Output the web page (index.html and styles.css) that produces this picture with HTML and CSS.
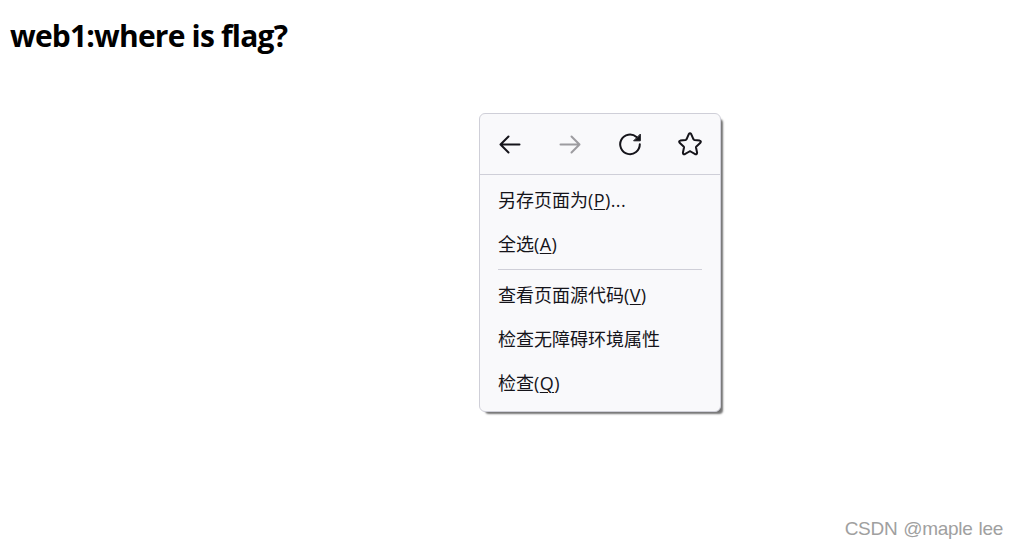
FILE: index.html
```
<!DOCTYPE html>
<html lang="zh-CN">
<head>
<meta charset="UTF-8">
<meta name="viewport" content="width=device-width, initial-scale=1.0">
<title>web1</title>
<link rel="stylesheet" href="styles.css">
</head>
<body>
<h1 class="title">web1:where is flag?</h1>

<!-- 右键菜单 -->
<div class="menu">
<div class="nav">
<button class="nav-btn" aria-label="后退">
<svg class="icon" viewBox="0 0 24 24">
<path d="M21.500 12.500H2.500M10.500 4.500l-8 8 8 8"/>
</svg>
</button>
<button class="nav-btn" aria-label="前进" disabled>
<svg class="icon" viewBox="0 0 24 24">
<path d="M2.500 12.500h19M13.500 4.500l8 8-8 8"/>
</svg>
</button>
<button class="nav-btn" aria-label="刷新">
<svg class="icon" viewBox="0 0 24 24">
<path d="M21.800 12.300A9.800 9.800 0 1 1 18.500 5"/>
<path class="solid" d="M22.300 2.500v6.300H16z"/>
</svg>
</button>
<button class="nav-btn" aria-label="收藏">
<svg class="icon" viewBox="0 0 24 24">
<path d="M10.800 2.100q1.200-1.800 2.400 0l2.300 5.200q.3.600 1 .7l5.100.6q1.900.6.800 2.200l-4 3.600q-.5.500-.4 1.100l1.100 5.300q-.1 1.900-1.900 1.400l-4.600-2.700q-.6-.3-1.200 0l-4.600 2.700q-1.800.5-1.900-1.400L6 15.500q.1-.6-.4-1.100l-4-3.600q-1.100-1.600.8-2.200L7.500 8q.7-.1 1-.7z"/>
</svg>
</button>
</div>
<div class="list">
<div class="item">另存页面为<span class="key">(<u>P</u>)...</span></div>
<div class="item">全选<span class="key">(<u>A</u>)</span></div>
<div class="line"></div>
<div class="item">查看页面源代码<span class="key">(<u>V</u>)</span></div>
<div class="item">检查无障碍环境属性</div>
<div class="item">检查<span class="key">(<u>Q</u>)</span></div>
</div>
</div>

<div class="watermark">CSDN @maple lee</div>
</body>
</html>
```
FILE: styles.css
```
body {
margin: 0;
height: 548px;
overflow: hidden;
background-color: #fff;
}

/* 页面标题 */
.title {
margin: 0;
padding: 16px 10px 0;
font: bold 30px/40px "Open Sans", "Noto Sans", sans-serif;
letter-spacing: -0.8px;
color: #000;
}

/* 右键菜单浮在页面上方 */
.menu {
position: absolute;
left: 479px;
top: 113px;
box-sizing: border-box;
width: 242px;
height: 299px;
border: 1px solid #cfcfd8;
border-radius: 6px;
background-color: #f9f9fb;
box-shadow: 4px 4px 2px -2px rgba(0, 0, 0, 0.55);
color: #15141a;
}

/* 顶部图标按钮 */
.nav {
display: flex;
height: 60px;
border-bottom: 1px solid #cfcfd8;
}

.nav-btn {
display: flex;
flex: 1;
justify-content: center;
align-items: center;
padding: 0;
border: none;
background: none;
color: inherit;
}

.nav-btn:disabled {
opacity: 0.4;
}

.icon {
width: 24px;
height: 24px;
fill: none;
stroke: currentColor;
stroke-width: 2;
stroke-linecap: round;
stroke-linejoin: round;
}

.solid {
fill: currentColor;
stroke-width: 1;
}

/* 菜单项 */
.list {
padding: 3px 18px;
}

.item {
height: 44px;
font: 18px/44px "Open Sans", "Noto Sans CJK SC", sans-serif;
white-space: nowrap;
}

.key {
letter-spacing: 0.4px;
}

.item u {
text-decoration-thickness: 1px;
text-underline-offset: 2px;
}

.line {
height: 1px;
margin: 3px 0;
background-color: #cfcfd8;
}

/* 右下角水印 */
.watermark {
position: absolute;
right: 15px;
bottom: 7px;
font: 19px/24px "Liberation Sans", sans-serif;
letter-spacing: -0.3px;
word-spacing: 1px;
color: #a0a0a0;
}
```
